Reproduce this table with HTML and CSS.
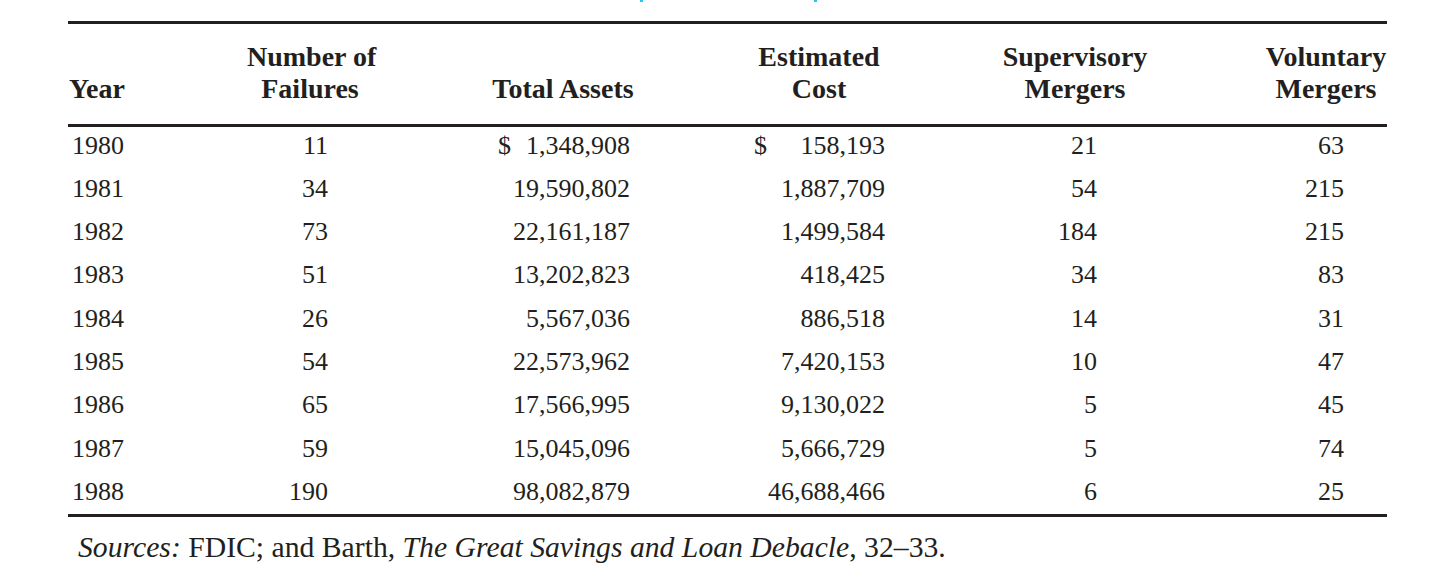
FILE: index.html
```html
<!DOCTYPE html>
<html lang="en">
<head>
<meta charset="utf-8">
<title>Bank failures 1980–1988</title>
<link rel="stylesheet" href="styles.css">
</head>
<body>
<div class="page">
  <div class="cut-title"><span class="paren p1"></span><span class="paren p2"></span></div>
  <table class="data">
    <colgroup>
      <col class="c-year"><col class="c-fail"><col class="c-assets"><col class="c-cost"><col class="c-sup"><col class="c-vol">
    </colgroup>
    <thead>
      <tr>
        <th class="h-year">Year</th>
        <th>Number of<br>Failures</th>
        <th>Total Assets</th>
        <th>Estimated<br>Cost</th>
        <th>Supervisory<br>Mergers</th>
        <th>Voluntary<br>Mergers</th>
      </tr>
    </thead>
    <tbody>
      <tr><td class="year">1980</td><td class="fail">11</td><td class="assets"><span class="cur">$</span><span>1,348,908</span></td><td class="cost"><span class="cur">$</span><span>158,193</span></td><td class="sup">21</td><td class="vol">63</td></tr>
      <tr><td class="year">1981</td><td class="fail">34</td><td class="assets"><span></span><span>19,590,802</span></td><td class="cost"><span></span><span>1,887,709</span></td><td class="sup">54</td><td class="vol">215</td></tr>
      <tr><td class="year">1982</td><td class="fail">73</td><td class="assets"><span></span><span>22,161,187</span></td><td class="cost"><span></span><span>1,499,584</span></td><td class="sup">184</td><td class="vol">215</td></tr>
      <tr><td class="year">1983</td><td class="fail">51</td><td class="assets"><span></span><span>13,202,823</span></td><td class="cost"><span></span><span>418,425</span></td><td class="sup">34</td><td class="vol">83</td></tr>
      <tr><td class="year">1984</td><td class="fail">26</td><td class="assets"><span></span><span>5,567,036</span></td><td class="cost"><span></span><span>886,518</span></td><td class="sup">14</td><td class="vol">31</td></tr>
      <tr><td class="year">1985</td><td class="fail">54</td><td class="assets"><span></span><span>22,573,962</span></td><td class="cost"><span></span><span>7,420,153</span></td><td class="sup">10</td><td class="vol">47</td></tr>
      <tr><td class="year">1986</td><td class="fail">65</td><td class="assets"><span></span><span>17,566,995</span></td><td class="cost"><span></span><span>9,130,022</span></td><td class="sup">5</td><td class="vol">45</td></tr>
      <tr><td class="year">1987</td><td class="fail">59</td><td class="assets"><span></span><span>15,045,096</span></td><td class="cost"><span></span><span>5,666,729</span></td><td class="sup">5</td><td class="vol">74</td></tr>
      <tr><td class="year">1988</td><td class="fail">190</td><td class="assets"><span></span><span>98,082,879</span></td><td class="cost"><span></span><span>46,688,466</span></td><td class="sup">6</td><td class="vol">25</td></tr>
    </tbody>
  </table>
  <p class="sources"><em>Sources:</em> FDIC; and Barth, <em>The Great Savings and Loan Debacle</em>, 32–33.</p>
</div>
</body>
</html>
```

FILE: styles.css
```css
html, body {
  margin: 0;
  padding: 0;
  background: #ffffff;
}

body {
  font-family: "Liberation Serif", "Times New Roman", serif;
  color: #231f20;
}

.page {
  padding-left: 68px;
  width: 1319px;
}

.cut-title {
  display: flex;
  height: 21px;
}

.paren {
  display: block;
  width: 3px;
  height: 2px;
  background: #29c5f6;
}

.p1 { margin-left: 572px; }
.p2 { margin-left: 171px; }

.data {
  width: 1319px;
  border-collapse: collapse;
  table-layout: fixed;
  border-top: 3px solid #231f20;
  border-bottom: 3px solid #231f20;
}

.c-year { width: 179px; }
.c-fail { width: 126px; }
.c-assets { width: 380px; }
.c-cost { width: 132px; }
.c-sup { width: 380px; }
.c-vol { width: 122px; }

.data th {
  font-size: 28px;
  font-weight: bold;
  line-height: 32px;
  text-align: center;
  vertical-align: bottom;
  padding: 17px 0 19px 0;
  border-bottom: 3px solid #231f20;
  white-space: nowrap;
}

.data th.h-year {
  text-align: left;
  padding-left: 1px;
}

.data td {
  font-size: 26px;
  line-height: 30px;
  height: 43.3px;
  padding: 0;
  vertical-align: top;
  padding-top: 5px;
  box-sizing: border-box;
  text-align: right;
  white-space: nowrap;
}

.data tbody tr:first-child td {
  padding-top: 4px;
}

.data td.year {
  text-align: left;
  padding-left: 4px;
}

.data td.fail { padding-right: 45px; }

.data td.assets,
.data td.cost {
  text-align: left;
}

.data td.assets > span:last-child,
.data td.cost > span:last-child {
  float: right;
}

.data td.assets { padding-left: 125px; padding-right: 123px; }
.data td.cost { padding-left: 1px; padding-right: 0; }

.data td.sup { padding-right: 168px; }
.data td.vol { padding-right: 43px; }

.sources {
  margin: 13px 0 0 10px;
  font-size: 29.7px;
  line-height: 34px;
}
```
